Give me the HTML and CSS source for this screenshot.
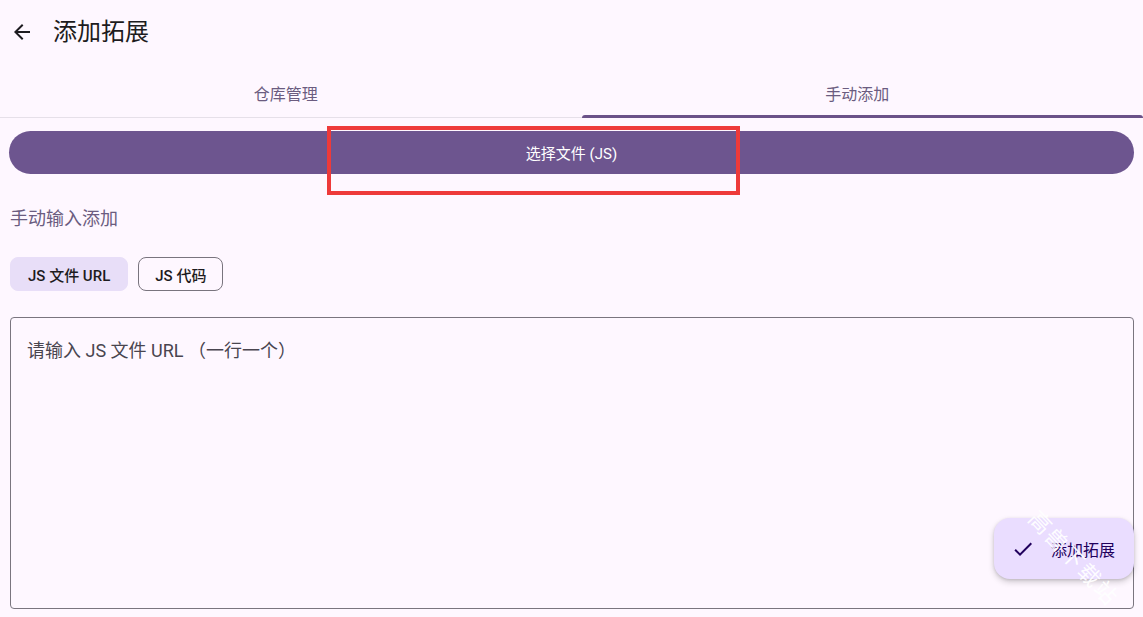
FILE: index.html
```html
<!DOCTYPE html>
<html lang="zh">
<head>
<meta charset="utf-8">
<link rel="stylesheet" href="styles.css">
</head>
<body>
<div class="app">
  <header class="topbar">
    <svg class="back" viewBox="0 0 24 24" width="24" height="24"><path d="M20 11H7.83l5.59-5.59L12 4l-8 8 8 8 1.41-1.41L7.83 13H20v-2z" fill="#1d1b20"/></svg>
    <h1 class="title">添加拓展</h1>
  </header>
  <nav class="tabs">
    <div class="tab">仓库管理</div>
    <div class="tab active">手动添加<span class="indicator"></span></div>
  </nav>
  <main class="content">
    <button class="pick">选择文件 (JS)</button>
    <div class="section-label">手动输入添加</div>
    <div class="chips">
      <span class="chip selected">JS 文件 URL</span>
      <span class="chip">JS 代码</span>
    </div>
    <div class="field"><span class="placeholder">请输入 JS 文件 URL （一行一个）</span></div>
  </main>
  <div class="highlight"></div>
  <button class="fab">
    <svg viewBox="0 0 24 24" width="24" height="24"><path d="M9 16.17 4.83 12l-1.42 1.41L9 19 21 7l-1.41-1.41z" fill="#21005d"/></svg>
    <span>添加拓展</span>
  </button>
  <div class="watermark">高兽下载站</div>
</div>
</body>
</html>
```
FILE: styles.css
```css
* { box-sizing: border-box; }
html, body { margin: 0; padding: 0; }
body {
  background: #fef7ff;
  font-family: Roboto, "Noto Sans CJK SC", sans-serif;
  color: #1d1b20;
}
.app {
  position: relative;
  width: 1143px;
  height: 617px;
  overflow: hidden;
}
.topbar {
  height: 64px;
  display: flex;
  align-items: center;
  padding-left: 10px;
}
.back { display: block; }
.title {
  margin: 0 0 0 19px;
  font-size: 24px;
  font-weight: 400;
  line-height: 30px;
}
.tabs {
  display: flex;
  height: 54px;
  border-bottom: 1px solid #e6e0e9;
}
.tab {
  flex: 1;
  position: relative;
  display: flex;
  align-items: center;
  justify-content: center;
  padding-top: 4px;
  font-size: 16px;
  color: #6b5c80;
}
.indicator {
  position: absolute;
  left: 10px;
  right: 0;
  bottom: -1px;
  height: 3px;
  background: #6b5289;
  border-radius: 3px 3px 0 0;
}
.content {
  padding: 13px 9px 0 9px;
  display: flex;
  flex-direction: column;
}
.pick {
  height: 43px;
  border: none;
  border-radius: 22px;
  background: #6d558f;
  color: #fff;
  font-family: Roboto, "Noto Sans CJK SC", sans-serif;
  font-size: 15px;
  font-weight: 400;
}
.section-label {
  margin-top: 33px;
  padding-left: 1px;
  font-size: 18px;
  line-height: 24px;
  color: #6b5c80;
}
.chips {
  display: flex;
  gap: 10px;
  margin-top: 26px;
  padding-left: 1px;
}
.chip {
  height: 34px;
  display: flex;
  align-items: center;
  padding: 0 16px;
  border-radius: 8px;
  border: 1px solid #79747e;
  font-size: 15px;
  font-weight: 500;
  color: #1d1b20;
}
.chip.selected {
  background: #e8def8;
  border-color: #e8def8;
  padding: 0 17px;
}
.field {
  margin: 26px 0 0 1px;
  height: 292px;
  border: 1.5px solid #7a757f;
  border-radius: 4px;
  padding: 20px 16px;
}
.placeholder {
  font-size: 18px;
  line-height: 26px;
  color: #49454f;
}
.highlight {
  position: absolute;
  left: 327px;
  top: 126px;
  width: 413px;
  height: 69px;
  border: 4px solid #ee3a3a;
}
.fab {
  position: absolute;
  left: 994px;
  top: 518px;
  width: 140px;
  height: 61px;
  border: none;
  border-radius: 16px;
  background: #eaddff;
  box-shadow: 0 3px 6px rgba(0,0,0,0.18), 0 1px 3px rgba(0,0,0,0.12);
  display: flex;
  align-items: center;
  padding: 0 0 0 17px;
  gap: 16px;
  font-family: Roboto, "Noto Sans CJK SC", sans-serif;
  font-size: 16px;
  color: #21005d;
}
.watermark {
  position: absolute;
  left: 1032px;
  top: 504px;
  font-size: 22px;
  line-height: 22px;
  color: rgba(255,255,255,0.95);
  transform: rotate(47deg);
  transform-origin: left center;
  letter-spacing: 2px;
  white-space: nowrap;
}
```
